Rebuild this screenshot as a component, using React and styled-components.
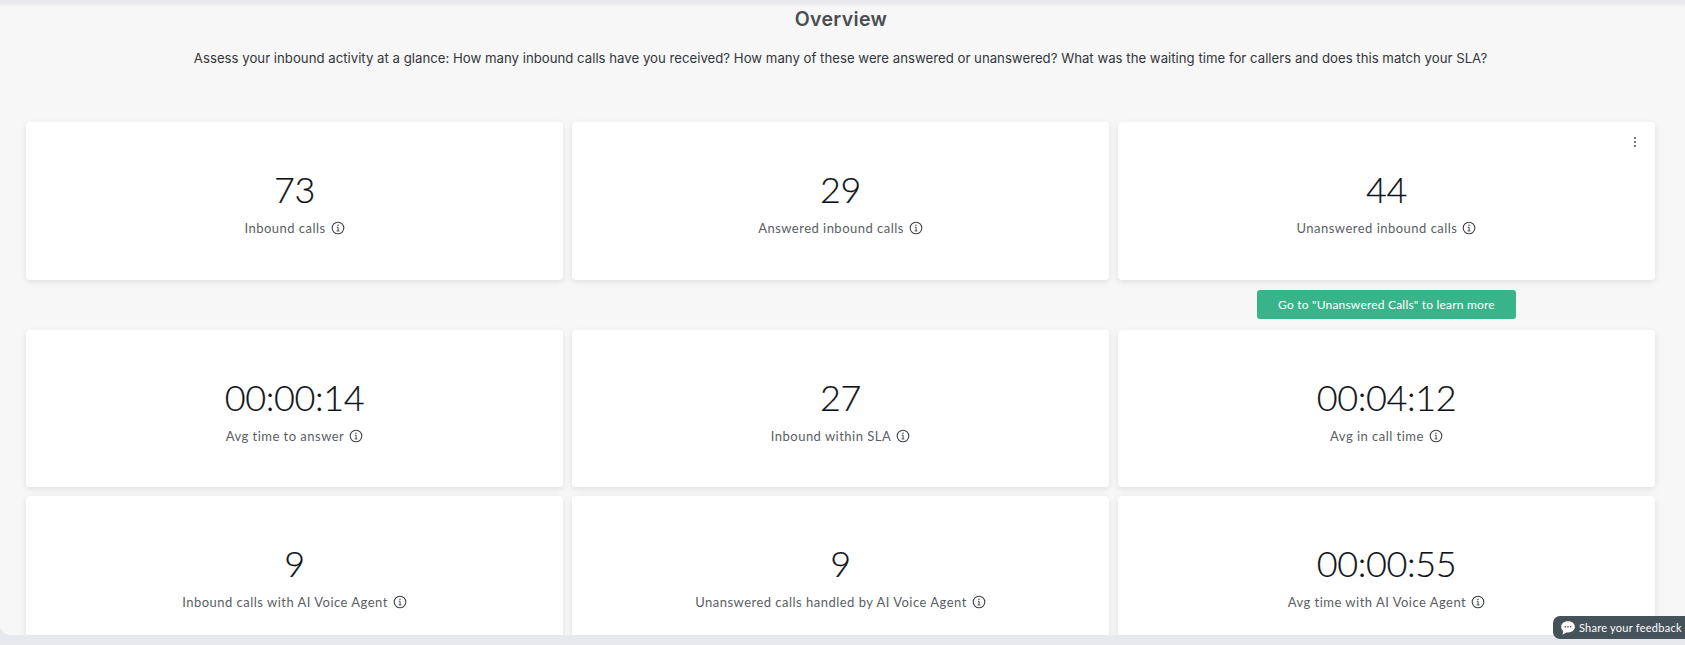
import React from 'react';
import styled, { createGlobalStyle } from 'styled-components';

const Global = createGlobalStyle`
	html, body { margin: 0; padding: 0; height: 100%; background: #e8e9ed; overflow: hidden; }
	body { font-family: Lato, "Open Sans", sans-serif; }
`

const Page = styled.div`
	position: relative;
	height: 645px;
	overflow: hidden;
`

const Panel = styled.main`
	height: 632px;
	margin-top: 3px;
	background: #f7f7f7;
	border-bottom-left-radius: 10px;
	box-shadow: inset 0 5px 5px -4px rgba(0, 0, 0, 0.07);
	overflow: hidden;
	display: flex;
	flex-direction: column;
`

const Title = styled.h1`
	margin: 0;
	padding: 4px 3px 0 0;
	height: 24px;
	line-height: 24px;
	font-family: Inter, sans-serif;
	font-size: 19.5px;
	font-weight: 600;
	color: #4a4d52;
	text-align: center;
	letter-spacing: 0.35px;
`

const Intro = styled.p`
	margin: 16px 0 0;
	padding-right: 4px;
	line-height: 22px;
	font-family: Inter, sans-serif;
	font-size: 13.2px;
	color: #32363b;
	text-align: center;
	letter-spacing: 0.01px;
`

const Rows = styled.div`
	margin-top: 53px;
	padding: 0 30px 0 26px;
	display: flex;
	flex-direction: column;
`

const Grid = styled.div`
	display: grid;
	grid-template-columns: repeat(3, 537px);
	column-gap: 9px;
`

const ButtonRow = styled.div`
	height: 50px;
	box-sizing: border-box;
	padding-top: 10px;
	display: grid;
	grid-template-columns: repeat(3, 537px);
	column-gap: 9px;
	align-items: start;
`

const GoButton = styled.button`
	grid-column: 3;
	justify-self: center;
	width: 259px;
	height: 29px;
	border: 0;
	border-radius: 3px;
	background: #39b48a;
	color: #fff;
	font: 400 12px Lato, sans-serif;
	letter-spacing: 0.2px;
`

const Card = styled.section`
	position: relative;
	height: ${p => p.$height}px;
	margin-bottom: ${p => p.$gap}px;
	background: #fff;
	border-radius: 4px;
	box-shadow: 0 2px 6px rgba(0, 0, 0, 0.1);
	display: flex;
	flex-direction: column;
	align-items: center;
	padding-top: 45px;
	box-sizing: border-box;
`

const Value = styled.div`
	height: 44px;
	line-height: 44px;
	font-size: 36px;
	font-weight: 300;
	letter-spacing: -0.4px;
	color: #0f1318;
	-webkit-text-stroke: 0.2px #0f1318;
`

const Label = styled.div`
	margin-top: 8px;
	display: flex;
	align-items: center;
	gap: 5px;
	height: 18px;
	font-size: 13px;
	letter-spacing: 0.48px;
	color: #5a5e64;
`

const Menu = styled.svg`
	position: absolute;
	top: 14px;
	right: 18px;
`

const Feedback = styled.div`
	position: absolute;
	left: 1553px;
	top: 616px;
	width: 132px;
	height: 23px;
	box-sizing: border-box;
	padding-left: 7px;
	border-radius: 7px 0 0 7px;
	background: #46525a;
	color: #fff;
	display: flex;
	align-items: center;
	gap: 3px;
	font-size: 11px;
	white-space: nowrap;
	letter-spacing: 0.25px;
`

const InfoIcon = () => (
	<svg width="14" height="14" viewBox="0 0 13 13" fill="none" stroke="#3d4146">
		<circle cx="6.5" cy="6.5" r="5.4" strokeWidth="1" />
		<circle cx="6.5" cy="3.9" r="0.7" fill="#3d4146" stroke="none" />
		<path d="M5.4 5.8h1.2v3.2M5.2 9.2h2.6" strokeWidth="0.9" />
	</svg>
)

const rows = [
	[
		['73', 'Inbound calls'],
		['29', 'Answered inbound calls'],
		['44', 'Unanswered inbound calls', true],
	],
	[
		['00:00:14', 'Avg time to answer'],
		['27', 'Inbound within SLA'],
		['00:04:12', 'Avg in call time'],
	],
	[
		['9', 'Inbound calls with AI Voice Agent'],
		['9', 'Unanswered calls handled by AI Voice Agent'],
		['00:00:55', 'Avg time with AI Voice Agent'],
	],
]

const Stat = ({ value, label, menu, height, gap }) => (
	<Card $height={height} $gap={gap}>
		{menu && (
			<Menu width="4" height="12" viewBox="0 0 4 12" fill="#555a60">
				<circle cx="2" cy="2" r="1.1" />
				<circle cx="2" cy="6" r="1.1" />
				<circle cx="2" cy="10" r="1.1" />
			</Menu>
		)}
		<Value>{value}</Value>
		<Label>
			{label}
			<InfoIcon />
		</Label>
	</Card>
)

export default function App() {
	return (
		<Page>
			<Global />
			<Panel>
				<Title>Overview</Title>
				<Intro>
					Assess your inbound activity at a glance: How many inbound calls have you received? How many of these were answered or unanswered? What was the waiting time for callers and does this match your SLA?
				</Intro>
				<Rows>
					<Grid>
						{rows[0].map(([value, label, menu]) => (
							<Stat key={label} value={value} label={label} menu={menu} height={158} gap={0} />
						))}
					</Grid>
					<ButtonRow>
						<GoButton>Go to "Unanswered Calls" to learn more</GoButton>
					</ButtonRow>
					<Grid>
						{rows[1].map(([value, label]) => (
							<Stat key={label} value={value} label={label} height={157} gap={9} />
						))}
					</Grid>
					<Grid>
						{rows[2].map(([value, label]) => (
							<Stat key={label} value={value} label={label} height={157} gap={0} />
						))}
					</Grid>
				</Rows>
			</Panel>
			<Feedback>
				<svg width="16" height="16" viewBox="0 0 14 14">
					<path d="M7 1C3.4 1 1 3.1 1 6c0 1.5.7 2.8 1.8 3.7L2.2 13l3.2-2.1c.5.1 1 .1 1.6.1 3.6 0 6-2.1 6-5s-2.4-5-6-5z" fill="#fff" />
					<circle cx="4.6" cy="6" r=".7" fill="#46525a" />
					<circle cx="7" cy="6" r=".7" fill="#46525a" />
					<circle cx="9.4" cy="6" r=".7" fill="#46525a" />
				</svg>
				Share your feedback
			</Feedback>
		</Page>
	)
}
